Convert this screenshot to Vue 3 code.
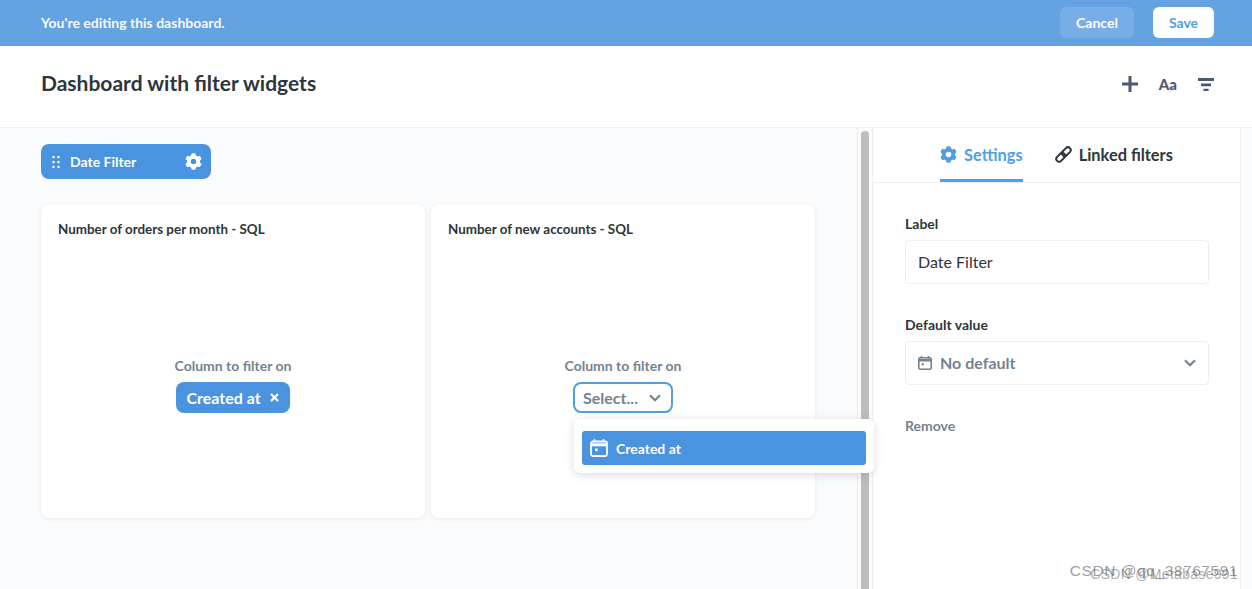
<template>
  <div class="page">
    <div class="edit-bar">
      <span class="edit-msg">You're editing this dashboard.</span>
      <div class="edit-actions">
        <button class="btn-cancel">Cancel</button>
        <button class="btn-save">Save</button>
      </div>
    </div>

    <header class="header">
      <h1 class="title">Dashboard with filter widgets</h1>
      <div class="tools">
        <svg class="tool-plus" width="16" height="16" viewBox="0 0 16 16"><path d="M6.5 0h3v6.5H16v3H9.5V16h-3V9.5H0v-3h6.5z" fill="#4c5773" /></svg>
        <span class="tool-text">Aa</span>
        <svg class="tool-filter" width="16" height="14" viewBox="0 0 16 14"><path d="M0 0h16v3H0zM3 5.6h10v2.6H3zM5.4 10.8h5.2V13H5.4z" fill="#4c5773" /></svg>
      </div>
    </header>

    <div class="body">
      <main class="canvas">
        <div class="filter-pill">
          <svg width="9" height="12" viewBox="0 0 9 12" fill="#fff">
            <circle v-for="d in gripDots" :key="d.x + '-' + d.y" :cx="d.x" :cy="d.y" r="1.25" />
          </svg>
          <span class="pill-label">Date Filter</span>
          <svg class="pill-gear" width="17" height="17" viewBox="0 0 16 16"><path :d="gearPath" fill="#fff" fill-rule="evenodd" /></svg>
        </div>

        <div class="cards">
          <section class="card">
            <h2 class="card-title">Number of orders per month - SQL</h2>
            <div class="card-center">
              <p class="column-label">Column to filter on</p>
              <div class="chip">
                <span>Created at</span>
                <svg width="9" height="9" viewBox="0 0 9 9"><path d="M1 1l7 7M8 1L1 8" stroke="#fff" stroke-width="2.2" /></svg>
              </div>
            </div>
          </section>
          <section class="card">
            <h2 class="card-title">Number of new accounts - SQL</h2>
            <div class="card-center">
              <p class="column-label">Column to filter on</p>
              <div class="select-box">
                <span>Select...</span>
                <svg width="12" height="8" viewBox="0 0 12 8"><path d="M1 1.2l5 5 5-5" stroke="#74838f" stroke-width="2.2" fill="none" /></svg>
              </div>
            </div>
            <div class="popover">
              <div class="option">
                <svg width="18" height="18" viewBox="0 0 18 18" fill="none">
                  <rect x="1" y="2.5" width="16" height="14.5" rx="2" stroke="#fff" stroke-width="1.8" />
                  <path d="M1 5.8h16" stroke="#fff" stroke-width="3" />
                  <path d="M4.5 0.3v3M13.5 0.3v3" stroke="#fff" stroke-width="1.8" />
                  <rect x="5" y="9.5" width="2.6" height="2.6" fill="#fff" />
                </svg>
                <span>Created at</span>
              </div>
            </div>
          </section>
        </div>
      </main>

      <div class="scroll-track"><div class="scroll-thumb"></div></div>

      <aside class="sidebar">
        <nav class="tabs">
          <div class="tab tab-active">
            <svg width="17" height="17" viewBox="0 0 16 16"><path :d="gearPath" fill="#509ee3" fill-rule="evenodd" /></svg>
            <span>Settings</span>
          </div>
          <div class="tab">
            <svg width="17" height="17" viewBox="0 0 17 17" fill="none" stroke="#2e353b" stroke-width="2">
              <g transform="rotate(-45 8.5 8.5)">
                <rect x="-0.5" y="5.7" width="10" height="5.6" rx="2.8" />
                <rect x="7.5" y="5.7" width="10" height="5.6" rx="2.8" />
              </g>
            </svg>
            <span>Linked filters</span>
          </div>
        </nav>
        <div class="form">
          <div class="field">
            <label class="field-label">Label</label>
            <div class="input">Date Filter</div>
          </div>
          <div class="field">
            <label class="field-label">Default value</label>
            <div class="input input-select">
              <svg width="14" height="14" viewBox="0 0 14 14" fill="none">
                <rect x="0.8" y="1.7" width="12.4" height="11.5" rx="1.4" stroke="#74838f" stroke-width="1.6" />
                <path d="M0.8 4.2h12.4" stroke="#74838f" stroke-width="2.6" />
                <path d="M3.5 0v2.5M10.5 0v2.5" stroke="#74838f" stroke-width="1.5" />
                <rect x="3.6" y="7.2" width="2.2" height="2.2" fill="#74838f" />
              </svg>
              <span class="input-value">No default</span>
              <svg width="12" height="8" viewBox="0 0 12 8"><path d="M1 1.2l5 5 5-5" stroke="#74838f" stroke-width="2.2" fill="none" /></svg>
            </div>
          </div>
          <div class="remove">Remove</div>
        </div>
      </aside>
      <div class="right-strip"></div>
    </div>

    <div class="watermark mark-a">CSDN @qq_38767591</div>
    <div class="watermark mark-b">CSDN @Metabase991</div>
  </div>
</template>

<script setup>
const gripDots = [1.5, 6.5]
  .flatMap(x => [1, 6, 11].map(y => ({ x, y })))

// six-toothed cog with a round hole
function cogPath(outer, inner, hole) {
  const pts = []
  for (let i = 0; i < 6; i++) {
    const a = -90 + i * 60
    for (const [r, off] of [[inner, -21], [outer, -12], [outer, 12], [inner, 21]]) {
      const t = ((a + off) * Math.PI) / 180
      pts.push(`${(8 + r * Math.cos(t)).toFixed(2)} ${(8 + r * Math.sin(t)).toFixed(2)}`)
    }
  }
  const ring = `M${8 - hole} 8a${hole} ${hole} 0 1 0 ${hole * 2} 0a${hole} ${hole} 0 1 0 ${-hole * 2} 0z`
  return `M${pts.join('L')}z${ring}`
}

const gearPath = cogPath(8, 6.2, 2.6)
</script>

<style>
html, body {
  margin: 0;
  background: #fff;
}
</style>

<style scoped>
.page {
  position: relative;
  width: 1252px;
  height: 589px;
  overflow: hidden;
  font-family: Lato, "Liberation Sans", sans-serif;
  color: #2e353b;
}
.edit-bar {
  height: 46px;
  background: #65a2e2;
  display: flex;
  align-items: center;
  justify-content: space-between;
  padding: 0 38px 1px 41px;
  box-sizing: border-box;
}
.edit-msg {
  color: #fff;
  font-size: 14px;
  font-weight: 700;
  opacity: 0.95;
}
.edit-actions {
  display: flex;
  gap: 19px;
}
.edit-actions button {
  height: 31px;
  border: none;
  border-radius: 6px;
  font-family: inherit;
  font-size: 14px;
  font-weight: 700;
  padding: 0;
}
.btn-cancel {
  width: 74px;
  background: #78aee7;
  color: #fff;
}
.btn-save {
  width: 61px;
  background: #fff;
  color: #509ee3;
}
.header {
  height: 82px;
  box-sizing: border-box;
  border-bottom: 1px solid #eceef0;
  display: flex;
  align-items: center;
  justify-content: space-between;
  padding: 0 38px 8px 41px;
}
.title {
  margin: 0;
  font-size: 21px;
  font-weight: 700;
  color: #2e353b;
}
.tools {
  display: flex;
  align-items: center;
  margin-top: 3px;
}
.tool-plus {
  margin-right: 21px;
}
.tool-text {
  font-size: 15px;
  font-weight: 900;
  color: #4c5773;
  margin-right: 21px;
}
.tool-filter {
  margin-top: 2px;
}
.body {
  display: flex;
  height: 461px;
}
.canvas {
  width: 858px;
  box-sizing: border-box;
  background: #f9fbfc;
  padding: 16px 0 0 41px;
  border-right: 1px solid #eceef0;
}
.filter-pill {
  width: 170px;
  height: 35px;
  box-sizing: border-box;
  background: #4a93de;
  border-radius: 8px;
  color: #fff;
  display: flex;
  align-items: center;
  padding: 0 9px 0 11px;
}
.pill-label {
  margin-left: 9px;
  font-size: 14px;
  font-weight: 700;
  flex: 1;
}
.cards {
  display: flex;
  gap: 6px;
  margin-top: 25px;
}
.card {
  position: relative;
  width: 384px;
  height: 314px;
  box-sizing: border-box;
  background: #fff;
  border-radius: 8px;
  box-shadow: 0 1px 4px rgba(0, 0, 0, 0.08);
  padding: 17px;
  display: flex;
  flex-direction: column;
}
.card-title {
  margin: 0;
  font-size: 13.4px;
  font-weight: 700;
  line-height: 16px;
  color: #2e353b;
}
.card-center {
  display: flex;
  flex-direction: column;
  align-items: center;
  margin-top: 120px;
}
.column-label {
  margin: 0 0 8px;
  font-size: 14px;
  line-height: 17px;
  font-weight: 700;
  color: #74838f;
}
.chip {
  height: 31px;
  box-sizing: border-box;
  background: #4a93de;
  color: #fff;
  border-radius: 8px;
  display: flex;
  align-items: center;
  gap: 9px;
  padding: 0 11px 0 10px;
  font-size: 16px;
  font-weight: 700;
}
.select-box {
  height: 31px;
  box-sizing: border-box;
  border: 2px solid #509ee3;
  border-radius: 8px;
  display: flex;
  align-items: center;
  gap: 11px;
  padding: 0 10px 0 8px;
  font-size: 16px;
  font-weight: 700;
  color: #74838f;
  background: #fff;
}
.popover {
  position: absolute;
  left: 143px;
  top: 215px;
  width: 300px;
  height: 54px;
  box-sizing: border-box;
  background: #fff;
  border-radius: 6px;
  box-shadow: 0 2px 10px rgba(0, 0, 0, 0.14);
  padding: 12px 8px;
  z-index: 2;
}
.option {
  height: 34px;
  background: #4a93de;
  border-radius: 3px;
  color: #fff;
  display: flex;
  align-items: center;
  gap: 8px;
  padding: 0 8px;
  font-size: 14px;
  font-weight: 700;
}
.scroll-track {
  width: 14px;
  box-sizing: border-box;
  background: #fbfbfb;
  padding: 3px 3px 0;
}
.scroll-thumb {
  height: 100%;
  background: #bdbdbd;
  border-radius: 4px 4px 0 0;
}
.sidebar {
  width: 369px;
  box-sizing: border-box;
  background: #fff;
  border-left: 1px solid #eceef0;
  border-right: 1px solid #eceef0;
}
.tabs {
  height: 55px;
  box-sizing: border-box;
  border-bottom: 1px solid #eceef0;
  display: flex;
  justify-content: center;
  gap: 32px;
}
.tab {
  display: flex;
  align-items: center;
  gap: 7px;
  font-size: 16.4px;
  font-weight: 700;
  color: #2e353b;
  height: 54px;
  box-sizing: border-box;
  padding-bottom: 2px;
}
.tab-active {
  color: #509ee3;
  border-bottom: 3px solid #509ee3;
  padding: 1px 0 0;
}
.form {
  padding: 32px 31px 0 32px;
}
.field {
  margin-bottom: 32px;
}
.field-label {
  display: block;
  font-size: 14px;
  line-height: 17px;
  font-weight: 700;
  color: #2e353b;
  margin-bottom: 8px;
}
.input {
  height: 44px;
  box-sizing: border-box;
  border: 1px solid #eceef0;
  border-radius: 4px;
  display: flex;
  align-items: center;
  padding: 0 12px 1px;
  font-size: 16px;
  color: #2e353b;
}
.input-select {
  gap: 8px;
}
.input-value {
  flex: 1;
  font-weight: 700;
  color: #74838f;
}
.remove {
  font-size: 14px;
  font-weight: 700;
  color: #74838f;
}
.right-strip {
  flex: 1;
  background: #f9fbfc;
}
.watermark {
  position: absolute;
  font-family: "Liberation Sans", sans-serif;
  line-height: 18px;
  white-space: nowrap;
  right: 14px;
}
.mark-a {
  top: 562px;
  font-size: 15.5px;
  letter-spacing: 0.55px;
  color: rgba(90, 90, 90, 0.6);
}
.mark-b {
  top: 565px;
  font-size: 14px;
  letter-spacing: 0.3px;
  color: rgba(90, 90, 90, 0.5);
}
</style>
